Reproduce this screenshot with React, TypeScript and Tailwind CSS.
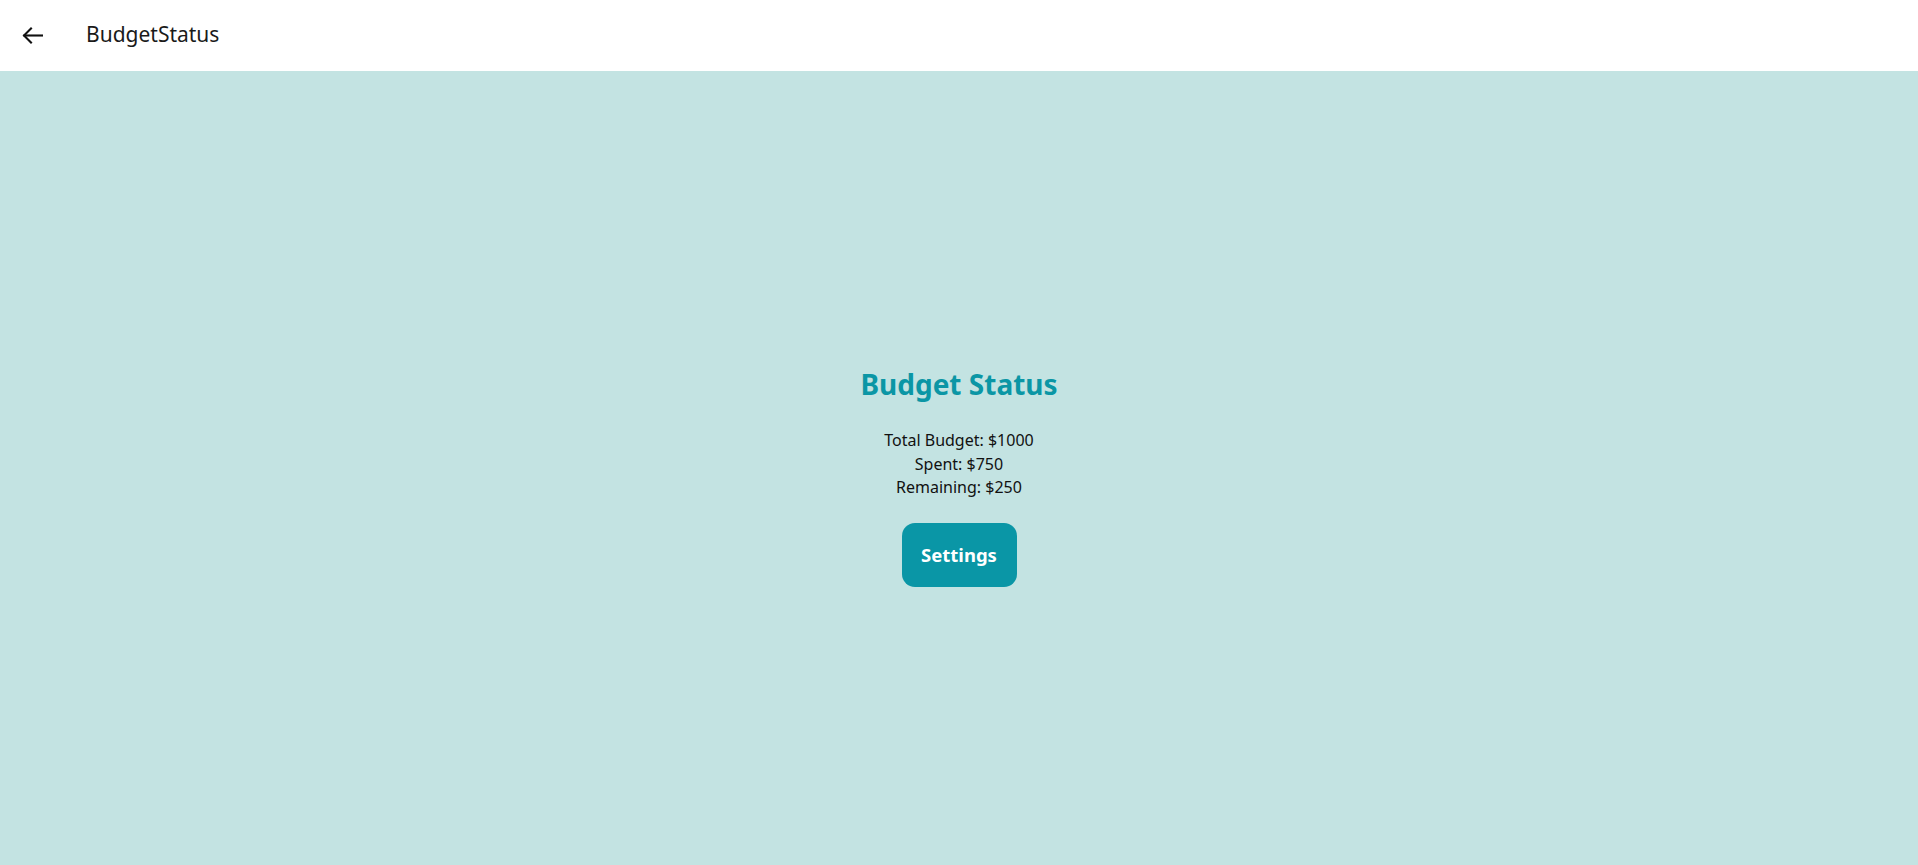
import React from "react";

export default function App() {
  return (
    <div className="w-full h-[865px] flex flex-col bg-[#c3e3e2]" style={{ fontFamily: '"Noto Sans", "Open Sans", sans-serif' }}>
      <header className="h-[71px] shrink-0 bg-white flex items-center">
        <button className="ml-[22px] w-[21px] h-[17px] flex items-center justify-center text-[#111]">
          <svg width="21" height="17" viewBox="0 0 21 17" fill="none" stroke="currentColor" strokeWidth="2.1" strokeLinecap="square">
            <path d="M9 1.5 L2 8.5 L9 15.5" />
            <path d="M2.5 8.5 H20" />
          </svg>
        </button>
        <h1 className="ml-[43px] text-[21px] text-[#1a1a1a] leading-none -mt-[2px]">BudgetStatus</h1>
      </header>
      <main className="flex-1 flex flex-col items-center justify-center pt-[21px]">
        <h2 className="text-[28px] font-bold text-[#0b96a5] leading-none">Budget Status</h2>
        <div className="mt-[31px] text-[16px] leading-[23.5px] text-[#111] text-center">
          <p>Total Budget: $1000</p>
          <p>Spent: $750</p>
          <p>Remaining: $250</p>
        </div>
        <button className="mt-[23px] w-[115px] h-[64px] rounded-[13px] bg-[#0a96a6] text-white font-bold text-[18.5px]">
          Settings
        </button>
      </main>
    </div>
  );
}
